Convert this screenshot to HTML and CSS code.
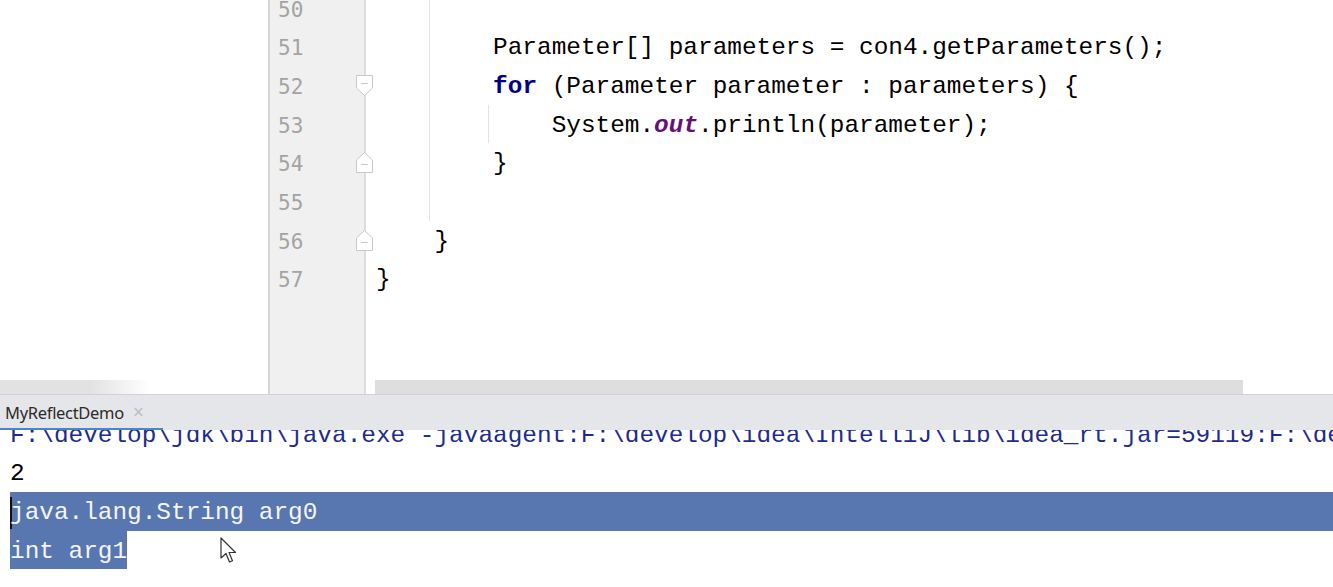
FILE: index.html
```
<!DOCTYPE html>
<html lang="en">

<head>
  <meta charset="UTF-8">
  <meta name="viewport" content="width=device-width, initial-scale=1.0">
  <title>MyReflectDemo</title>
  <link rel="stylesheet" href="styles.css">
</head>

<body>
  <div class="editor">
    <div class="side">
      <div class="side-scroll"></div>
    </div>

    <div class="gutter">
      <div class="ln">50</div>
      <div class="ln">51</div>
      <div class="ln">52 <svg class="fold" width="17" height="21" viewBox="0 0 17 21"><path d="M0.5 0.5H16.5V13L8.5 20.5L0.5 13Z" /><path d="M5 8.5H12" /></svg></div>
      <div class="ln">53</div>
      <div class="ln">54 <svg class="fold" width="17" height="21" viewBox="0 0 17 21"><path d="M0.5 20.5H16.5V8L8.5 0.5L0.5 8Z" /><path d="M5 12.5H12" /></svg></div>
      <div class="ln">55</div>
      <div class="ln">56 <svg class="fold" width="17" height="21" viewBox="0 0 17 21"><path d="M0.5 20.5H16.5V8L8.5 0.5L0.5 8Z" /><path d="M5 12.5H12" /></svg></div>
      <div class="ln">57</div>
    </div>

    <div class="code">
      <div class="lines">
        <div class="line g1"> </div>
        <div class="line g1">        Parameter[] parameters = con4.getParameters();</div>
        <div class="line g1">        <b class="kw">for</b> (Parameter parameter : parameters) {</div>
        <div class="line g1 g2">            System.<i class="field">out</i>.println(parameter);</div>
        <div class="line g1">        }</div>
        <div class="line g1"> </div>
        <div class="line">    }</div>
        <div class="line">}</div>
      </div>
      <div class="hscroll"></div>
    </div>
  </div>

  <div class="tabs">
    <div class="tab">MyReflectDemo<span class="close">×</span></div>
  </div>

  <div class="console">
    <div class="out sys">F:\develop\jdk\bin\java.exe -javaagent:F:\develop\idea\IntelliJ\lib\idea_rt.jar=59119:F:\develop\idea\IntelliJ\bin</div>
    <div class="out">2</div>
    <div class="out sel"><span class="caret"></span>java.lang.String arg0</div>
    <div class="out"><span class="sel-part">int arg1</span></div>
  </div>

  <svg class="pointer" width="18" height="28" viewBox="0 0 18 28">
    <path d="M1 1V21L6 16.5L9.5 25L12.5 23.7L9 15.5H15.5Z" />
  </svg>
</body>

</html>
```

FILE: styles.css
```
* {
  margin: 0;
  padding: 0;
  box-sizing: border-box;
}

body {
  width: 1333px;
  height: 587px;
  overflow: hidden;
  background: #fff;
  display: flex;
  flex-direction: column;
  position: relative;
}

.editor {
  height: 394px;
  display: flex;
  flex-shrink: 0;
}

.side {
  width: 268px;
  display: flex;
  flex-direction: column;
  justify-content: flex-end;
}

.side-scroll {
  height: 14px;
  width: 150px;
  background: linear-gradient(to right, #e2e2e2 0, #e2e2e2 60%, #fff 100%);
}

.gutter {
  width: 98px;
  background: #f0f0f0;
  border-left: 2px solid #d6d6d6;
  border-right: 2px solid #dddddd;
}

.ln {
  height: 38.7px;
  line-height: 34.7px;
  padding-top: 4px;
  padding-left: 8px;
  font-family: "DejaVu Sans Mono", monospace;
  font-size: 21px;
  color: #a3a3a3;
  display: flex;
  justify-content: space-between;
  align-items: center;
}

.ln:first-child {
  margin-top: -11.35px;
}

.fold {
  margin-right: -9px;
  margin-top: -4px;
  position: relative;
  z-index: 1;
  fill: #fff;
  stroke: #c9c9c9;
  stroke-width: 1;
}

.code {
  flex: 1;
  display: flex;
  flex-direction: column;
  overflow: hidden;
}

.lines {
  flex: 1;
}

.line {
  height: 38.7px;
  line-height: 34.7px;
  padding-top: 4px;
  padding-left: 10px;
  white-space: pre;
  font-family: "Liberation Mono", monospace;
  font-size: 24.4px;
  color: #000;
  background-repeat: no-repeat;
}

.line:first-child {
  margin-top: -11.35px;
}

.g1 {
  background-image: linear-gradient(#e4e4e4, #e4e4e4);
  background-size: 1px 100%;
  background-position: 63px 0;
}

.g2 {
  background-image: linear-gradient(#e4e4e4, #e4e4e4), linear-gradient(#e4e4e4, #e4e4e4);
  background-size: 1px 100%, 1px 100%;
  background-position: 63px 0, 122px 0;
}

.kw {
  color: #000080;
}

.field {
  color: #660e7a;
  font-weight: bold;
}

.hscroll {
  height: 14px;
  width: 868px;
  margin-left: 9px;
  background: #dedede;
}

.tabs {
  height: 36px;
  flex-shrink: 0;
  background: #e5e6e9;
  border-top: 1px solid #d2d2d2;
  display: flex;
}

.tab {
  width: 163px;
  padding-left: 5px;
  border-bottom: 2px solid #4a86c8;
  font-family: "Noto Sans", sans-serif;
  font-size: 16.5px;
  letter-spacing: -0.3px;
  line-height: 34px;
  color: #2b2b2b;
  white-space: nowrap;
}

.close {
  color: #bdbdbd;
  font-size: 19px;
  margin-left: 9px;
}

.console {
  flex: 1;
  overflow: hidden;
}

.out {
  height: 38.7px;
  line-height: 34.7px;
  padding-top: 4px;
  margin-left: 10px;
  white-space: pre;
  font-family: "Liberation Mono", monospace;
  font-size: 24.4px;
  color: #000;
}

.out:first-child {
  margin-top: -15.35px;
}

.sys {
  color: #1f2b8e;
}

.sel {
  background: #5877b0;
  color: #f4f4f4;
}

.sel-part {
  display: inline-block;
  height: 38.7px;
  margin-top: -4px;
  padding-top: 4px;
  background: #5877b0;
  color: #f4f4f4;
}

.caret {
  display: inline-block;
  width: 2px;
  height: 32px;
  margin-right: -2px;
  vertical-align: middle;
  background: #111;
}

.pointer {
  position: absolute;
  left: 220px;
  top: 537px;
  fill: #fff;
  stroke: #333;
  stroke-width: 1.2;
  stroke-linejoin: round;
}
```
